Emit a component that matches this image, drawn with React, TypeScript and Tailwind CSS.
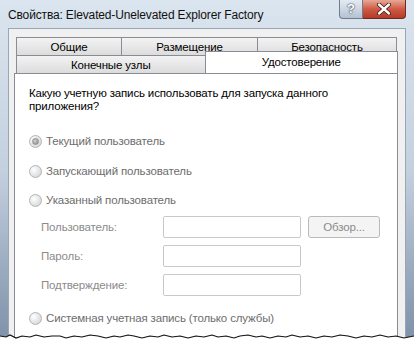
const disabled = "text-[#6d6d6d]";

function Radio({ checked = false }: { checked?: boolean }) {
  return (
    <span className="w-[13px] h-[13px] rounded-full border border-[#b5b5b5] bg-[radial-gradient(circle_at_35%_35%,#ffffff,#dcdcdc_70%,#c9c9c9)] flex items-center justify-center shrink-0">
      {checked && (
        <span className="w-[7px] h-[7px] rounded-full bg-[radial-gradient(circle_at_35%_35%,#d0d0d0,#8a8a8a)] border border-[#8f8f8f]" />
      )}
    </span>
  );
}

function RadioRow({ label, checked, className }: { label: string; checked?: boolean; className: string }) {
  return (
    <div className={"flex items-center gap-[4px] h-[16px] " + className}>
      <Radio checked={checked} />
      <span className={disabled}>{label}</span>
    </div>
  );
}

function Field({ label, className, browse }: { label: string; className: string; browse?: boolean }) {
  return (
    <div className={"flex items-center h-[22px] " + className}>
      <span className="w-[134px] pl-[12px] text-[#8b8b8b]">{label}</span>
      <div className="w-[138px] h-[22px] bg-white border border-[#c9c9c9] rounded-[2px]" />
      {browse && (
        <div className="ml-[7px] w-[72px] h-[22px] rounded-[3px] border border-[#b7bbbf] bg-[#f4f4f4] flex items-center justify-center text-[#8b8b8b]">
          Обзор...
        </div>
      )}
    </div>
  );
}

function Tab({ label, w }: { label: string; w: string }) {
  return (
    <div
      className={
        w +
        " h-[18px] border border-b-0 border-[#898c95] -ml-px first:ml-0 bg-gradient-to-b from-[#f3f3f3] to-[#dcdcdc] flex items-center justify-center"
      }
    >
      {label}
    </div>
  );
}

export default function App() {
  return (
    <div className="w-[414px] h-[343px] relative overflow-hidden bg-gradient-to-b from-[#dbe5ef] via-[#c3d0de] to-[#7e90a8] flex flex-col font-['Segoe_UI','Liberation_Sans',sans-serif] text-[11.5px] tracking-[-0.15px] leading-[14px] text-black">
      <div className="h-[28px] flex items-start shrink-0">
        <div className="pl-[8px] pt-[7px] text-[12px] leading-[16px] text-[#111] flex-1">
          Свойства: Elevated-Unelevated Explorer Factory
        </div>
        <div className="flex mr-[8px]">
          <div className="w-[24px] h-[19px] rounded-bl-[4px] border border-t-0 border-[#6f7d8f] bg-gradient-to-b from-[#e4eaf1] via-[#cdd7e2] to-[#b3c1d1] flex items-center justify-center text-white font-bold text-[13px] tracking-normal [text-shadow:0_0_2px_#2c3a4b,0_0_1px_#2c3a4b]">
            ?
          </div>
          <div className="w-[43px] h-[19px] rounded-br-[4px] border border-t-0 border-l-0 border-[#6e2a20] bg-gradient-to-b from-[#e7a795] via-[#cf5a45] to-[#b53a27] flex items-center justify-center">
            <svg width="16" height="12" viewBox="0 0 16 12">
              <path d="M3 1.5 L13 10.5 M13 1.5 L3 10.5" stroke="#3a1410" strokeWidth="4" strokeLinecap="round" />
              <path d="M3 1.5 L13 10.5 M13 1.5 L3 10.5" stroke="#ffffff" strokeWidth="2.4" strokeLinecap="round" />
            </svg>
          </div>
        </div>
      </div>

      <div className="flex-1 mx-[8px] border border-b-0 border-[#98a6b6] bg-[#f0f0f0] pl-[5px] pr-[7px] pt-[8px] flex flex-col">
        <div className="ml-[2px] flex">
          <Tab label="Общие" w="w-[106px]" />
          <Tab label="Размещение" w="w-[137px]" />
          <Tab label="Безопасность" w="w-[140px]" />
        </div>
        <div className="ml-[2px] flex items-end h-[18px]">
          <Tab label="Конечные узлы" w="w-[190px]" />
          <div className="relative z-10 -ml-px w-[194px] h-[22px] mt-[-4px] self-start bg-white border border-b-0 border-[#898c95] flex justify-center pt-[3px]">
            Удостоверение
          </div>
        </div>
        <div className="flex-1 bg-white border border-[#898c95] pl-[14px] pt-[13px] flex flex-col">
          <div className="leading-[13px] text-black">
            Какую учетную запись использовать для запуска данного
            <br />
            приложения?
          </div>
          <RadioRow label="Текущий пользователь" checked className="mt-[20px]" />
          <RadioRow label="Запускающий пользователь" className="mt-[14px]" />
          <RadioRow label="Указанный пользователь" className="mt-[13px]" />
          <Field label="Пользователь:" browse className="mt-[8px]" />
          <Field label="Пароль:" className="mt-[7px]" />
          <Field label="Подтверждение:" className="mt-[7px]" />
          <RadioRow label="Системная учетная запись (только службы)" className="mt-[14px]" />
        </div>
      </div>

      <svg className="absolute left-0 bottom-0" width="414" height="10" viewBox="0 0 414 10">
        <path
          d="M0 3 L6 4 L10 2 L16 5 L22 3 L30 4 L36 2 L44 4 L52 3 L60 3 L66 5 L74 3 L82 4 L90 2 L98 3 L106 5 L114 3 L120 4 L128 2 L134 3 L142 5 L150 3 L158 4 L164 2 L172 4 L180 3 L188 5 L196 3 L204 4 L212 2 L218 4 L226 3 L234 5 L240 3 L248 2 L256 4 L262 3 L270 5 L278 3 L286 4 L292 2 L300 4 L308 3 L316 5 L324 3 L332 4 L340 2 L348 3 L356 5 L364 3 L372 4 L380 2 L388 4 L396 3 L404 5 L414 3 L414 10 L0 10 Z"
          fill="#ffffff"
        />
        <path
          d="M0 3 L6 4 L10 2 L16 5 L22 3 L30 4 L36 2 L44 4 L52 3 L60 3 L66 5 L74 3 L82 4 L90 2 L98 3 L106 5 L114 3 L120 4 L128 2 L134 3 L142 5 L150 3 L158 4 L164 2 L172 4 L180 3 L188 5 L196 3 L204 4 L212 2 L218 4 L226 3 L234 5 L240 3 L248 2 L256 4 L262 3 L270 5 L278 3 L286 4 L292 2 L300 4 L308 3 L316 5 L324 3 L332 4 L340 2 L348 3 L356 5 L364 3 L372 4 L380 2 L388 4 L396 3 L404 5 L414 3"
          fill="none"
          stroke="#111"
          strokeWidth="1.2"
        />
      </svg>
    </div>
  );
}
